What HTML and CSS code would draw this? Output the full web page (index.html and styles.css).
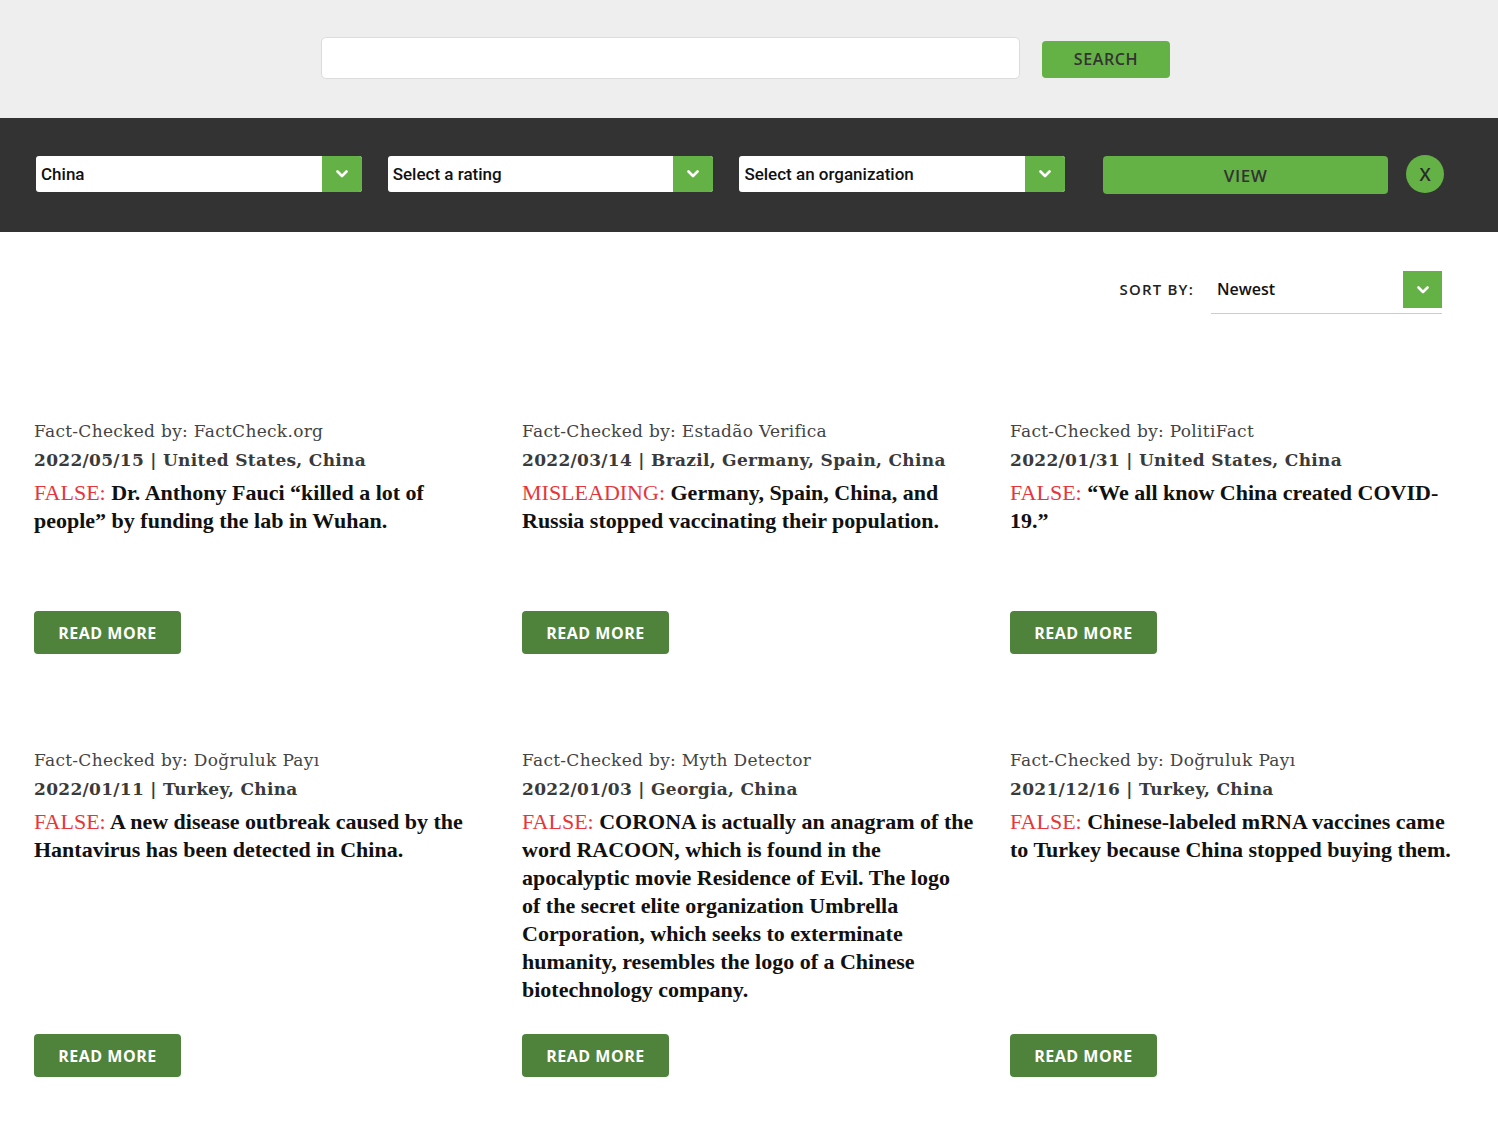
FILE: index.html
```html
<!DOCTYPE html>
<html lang="en">
<head>
<meta charset="utf-8">
<title>Fact checks</title>
<link rel="stylesheet" href="styles.css">
</head>
<body>
<header class="topbar">
  <input class="search-input" type="text" aria-label="Search">
  <button class="search-btn">SEARCH</button>
</header>

<section class="filterbar">
  <div class="select w-country">
    <span class="select-text">China</span>
    <span class="select-arrow"><svg width="12" height="8" viewBox="0 0 12 8"><polyline points="1.5,1.5 6,6 10.5,1.5" fill="none" stroke="#fff" stroke-width="2.6" stroke-linecap="round" stroke-linejoin="round"/></svg></span>
  </div>
  <div class="select">
    <span class="select-text">Select a rating</span>
    <span class="select-arrow"><svg width="12" height="8" viewBox="0 0 12 8"><polyline points="1.5,1.5 6,6 10.5,1.5" fill="none" stroke="#fff" stroke-width="2.6" stroke-linecap="round" stroke-linejoin="round"/></svg></span>
  </div>
  <div class="select">
    <span class="select-text">Select an organization</span>
    <span class="select-arrow"><svg width="12" height="8" viewBox="0 0 12 8"><polyline points="1.5,1.5 6,6 10.5,1.5" fill="none" stroke="#fff" stroke-width="2.6" stroke-linecap="round" stroke-linejoin="round"/></svg></span>
  </div>
  <button class="view-btn">VIEW</button>
  <button class="clear-btn">X</button>
</section>

<section class="sort-row">
  <span class="sort-label">SORT BY:</span>
  <div class="sort-select">
    <span class="sort-text">Newest</span>
    <span class="sort-arrow"><svg width="12" height="8" viewBox="0 0 12 8"><polyline points="1.5,1.5 6,6 10.5,1.5" fill="none" stroke="#fff" stroke-width="2.6" stroke-linecap="round" stroke-linejoin="round"/></svg></span>
  </div>
</section>

<main class="cards">
  <article class="card">
    <p class="by">Fact-Checked by: FactCheck.org</p>
    <p class="meta">2022/05/15 | United States, China</p>
    <h2 class="claim"><span class="rating">FALSE:</span> Dr. Anthony Fauci “killed a lot of people” by funding the lab in Wuhan.</h2>
    <a class="read-more" href="#">READ MORE</a>
  </article>
  <article class="card">
    <p class="by">Fact-Checked by: Estadão Verifica</p>
    <p class="meta">2022/03/14 | Brazil, Germany, Spain, China</p>
    <h2 class="claim"><span class="rating">MISLEADING:</span> Germany, Spain, China, and Russia stopped vaccinating their population.</h2>
    <a class="read-more" href="#">READ MORE</a>
  </article>
  <article class="card">
    <p class="by">Fact-Checked by: PolitiFact</p>
    <p class="meta">2022/01/31 | United States, China</p>
    <h2 class="claim"><span class="rating">FALSE:</span> “We all know China created COVID-19.”</h2>
    <a class="read-more" href="#">READ MORE</a>
  </article>
  <article class="card">
    <p class="by">Fact-Checked by: Doğruluk Payı</p>
    <p class="meta">2022/01/11 | Turkey, China</p>
    <h2 class="claim"><span class="rating">FALSE:</span> A new disease outbreak caused by the Hantavirus has been detected in China.</h2>
    <a class="read-more" href="#">READ MORE</a>
  </article>
  <article class="card">
    <p class="by">Fact-Checked by: Myth Detector</p>
    <p class="meta">2022/01/03 | Georgia, China</p>
    <h2 class="claim"><span class="rating">FALSE:</span> CORONA is actually an anagram of the word RACOON, which is found in the apocalyptic movie Residence of Evil. The logo of&nbsp;the secret elite organization Umbrella Corporation, which seeks to exterminate humanity, resembles the logo of a Chinese biotechnology company.</h2>
    <a class="read-more" href="#">READ MORE</a>
  </article>
  <article class="card">
    <p class="by">Fact-Checked by: Doğruluk Payı</p>
    <p class="meta">2021/12/16 | Turkey, China</p>
    <h2 class="claim"><span class="rating">FALSE:</span> Chinese-labeled mRNA vaccines came to Turkey because China stopped buying them.</h2>
    <a class="read-more" href="#">READ MORE</a>
  </article>
</main>
</body>
</html>
```

FILE: styles.css
```css
* { box-sizing: border-box; }

body {
  margin: 0;
  background: #ffffff;
  font-family: "Open Sans", "Liberation Sans", sans-serif;
  color: #111;
}

/* top search bar */
.topbar {
  height: 118px;
  background: #eeeeee;
  display: flex;
  align-items: center;
  justify-content: center;
  gap: 22px;
  padding-right: 7px;
}

.search-input {
  width: 699px;
  height: 42px;
  border: 1px solid #dcdcdc;
  border-radius: 5px;
  background: #fff;
  margin-top: -2px;
}

.search-btn {
  width: 128px;
  height: 37px;
  border: 0;
  border-radius: 4px;
  background: #64b245;
  color: #333;
  font-family: "Open Sans", sans-serif;
  font-size: 16px;
  font-weight: 600;
  letter-spacing: 0.6px;
  padding: 0;
}

/* filter bar */
.filterbar {
  height: 114px;
  background: #333333;
  display: flex;
  align-items: center;
  padding-left: 36px;
}

.select {
  width: 325.7px;
  height: 36px;
  margin-right: 26px;
  background: #fff;
  border-radius: 3px;
  display: flex;
  align-items: center;
  overflow: hidden;
  margin-top: -2px;
  flex-shrink: 0;
}

.select:nth-child(3) { margin-right: 38px; }

.select-text {
  flex: 1;
  padding-left: 5px;
  font-family: Roboto, "Liberation Sans", sans-serif;
  font-size: 17px;
  font-weight: 500;
  color: #111;
}

.select-arrow {
  width: 40px;
  height: 100%;
  background: #64b245;
  display: flex;
  align-items: center;
  justify-content: center;
}

.view-btn {
  width: 285px;
  height: 38px;
  border: 0;
  border-radius: 4px;
  background: #64b245;
  color: #333;
  font-family: "Open Sans", sans-serif;
  font-size: 17px;
  font-weight: 600;
  letter-spacing: 0.6px;
  padding: 0;
  flex-shrink: 0;
}

.clear-btn {
  width: 38px;
  height: 38px;
  margin-left: 18px;
  border: 0;
  border-radius: 50%;
  background: #64b245;
  color: #2a2a2a;
  font-family: "Open Sans", sans-serif;
  font-size: 18px;
  font-weight: 600;
  padding: 0;
  margin-top: -2px;
  flex-shrink: 0;
}

/* sort row */
.sort-row {
  display: flex;
  justify-content: flex-end;
  align-items: flex-start;
  gap: 17px;
  padding-right: 56px;
  margin-top: 39px;
}

.sort-label {
  font-family: "Open Sans", sans-serif;
  font-size: 15px;
  font-weight: 600;
  letter-spacing: 1.2px;
  color: #222;
  line-height: 37px;
}

.sort-select {
  width: 231px;
  height: 43px;
  border-bottom: 1px solid #cccccc;
  display: flex;
  align-items: flex-start;
}

.sort-text {
  flex: 1;
  padding-left: 6px;
  font-family: "Open Sans", sans-serif;
  font-size: 16px;
  font-weight: 600;
  color: #111;
  line-height: 37px;
}

.sort-arrow {
  width: 39px;
  height: 37px;
  background: #64b245;
  display: flex;
  align-items: center;
  justify-content: center;
}

/* cards */
.cards {
  display: grid;
  grid-template-columns: repeat(3, 1fr);
  column-gap: 34px;
  row-gap: 92px;
  padding: 0 34px;
  margin-top: 103px;
}

.card {
  display: flex;
  flex-direction: column;
  align-items: flex-start;
}

.by {
  margin: 0;
  font-family: "DejaVu Serif", serif;
  font-size: 17px;
  line-height: 29px;
  color: #444;
  letter-spacing: 0.3px;
}

.meta {
  margin: 0;
  font-family: "DejaVu Serif", serif;
  font-size: 17px;
  font-weight: 700;
  line-height: 29px;
  color: #3a3a3a;
  letter-spacing: 0.3px;
}

.claim {
  margin: 4px 0 30px;
  min-height: 102px;
  font-family: "Liberation Serif", serif;
  font-size: 22px;
  font-weight: 700;
  line-height: 28px;
  color: #111;
  letter-spacing: 0;
}

.rating {
  color: #e8353b;
  font-weight: 400;
}

.read-more {
  margin-top: auto;
  display: flex;
  align-items: center;
  justify-content: center;
  width: 147px;
  height: 43px;
  background: #4f823b;
  border-radius: 4px;
  color: #fff;
  text-decoration: none;
  font-family: "Open Sans", sans-serif;
  font-size: 16px;
  font-weight: 700;
  letter-spacing: 0.5px;
}
```
